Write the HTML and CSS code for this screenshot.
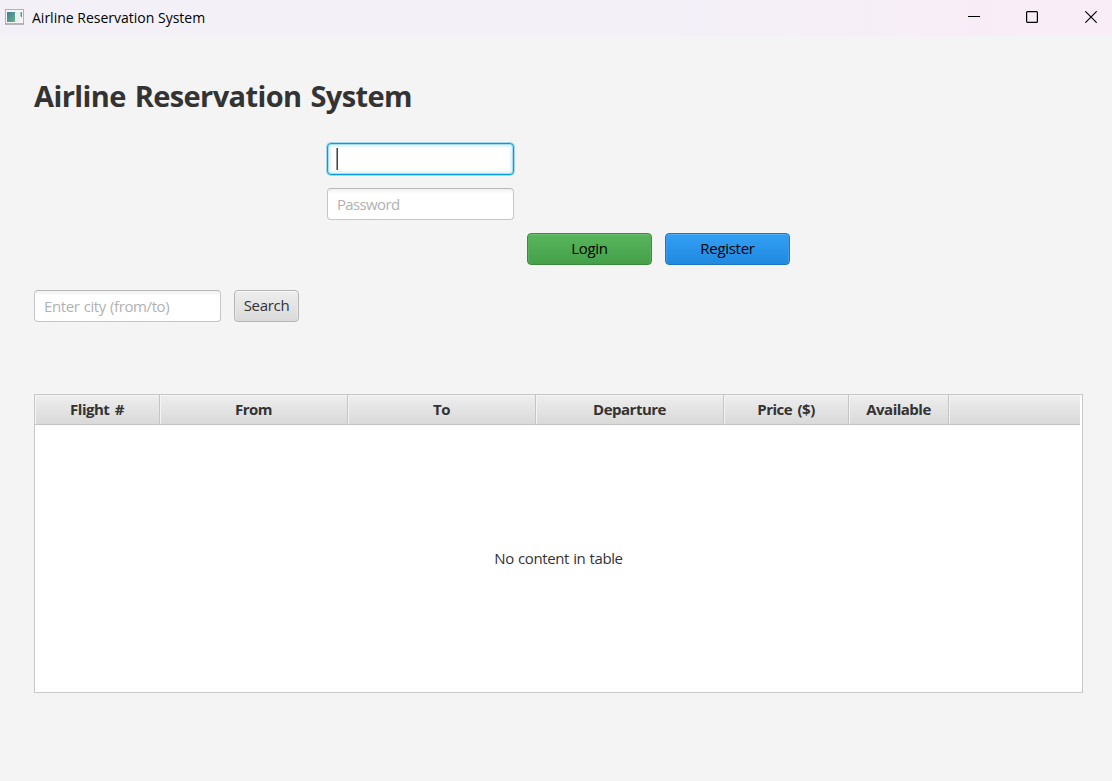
FILE: index.html
```html
<!DOCTYPE html>
<html lang="en">
<head>
<meta charset="utf-8">
<title>Airline Reservation System</title>
<link rel="stylesheet" href="styles.css">
</head>
<body>
<header class="titlebar">
  <svg class="app-icon" width="19" height="16" viewBox="0 0 19 16">
    <defs><linearGradient id="pane" x1="0" y1="0" x2="1" y2="1"><stop offset="0" stop-color="#4779a0"/><stop offset="1" stop-color="#60b580"/></linearGradient></defs>
    <rect x=".5" y=".5" width="18" height="14.500" fill="#f6f6f6" stroke="#b2b2b5"/>
    <path d="M0 15H19" stroke="#95959a"/>
    <rect x="2" y="3" width="8" height="10" fill="url(#pane)"/>
    <rect x="11" y="3" width="4" height="10" fill="#e9eeee"/>
    <path d="M15.500 3h1.500v6l-1.500-2z" fill="#539a91"/>
  </svg>
  <span class="caption">Airline Reservation System</span>
  <div class="controls">
    <svg width="12" height="12" viewBox="0 0 12 12"><path d="M0 5.500H12" stroke="#000"/></svg>
    <svg width="12" height="12" viewBox="0 0 12 12"><rect x=".6" y=".6" width="10.800" height="10.800" rx="1" fill="none" stroke="#000" stroke-width="1.200"/></svg>
    <svg class="close" width="12" height="12" viewBox="0 0 12 12"><path d="M.3 .3L11.700 11.700M11.700 .3L.3 11.700" stroke="#000" stroke-width="1.150"/></svg>
  </div>
</header>
<main class="content">
  <h1 class="heading">Airline Reservation System</h1>
  <form class="login">
    <div class="field focused"><span class="caret"></span></div>
    <div class="field password"><span class="t-password">Password</span></div>
    <div class="actions">
      <button type="button" class="btn green"><span>Login</span></button>
      <button type="button" class="btn blue"><span>Register</span></button>
    </div>
  </form>
  <div class="search">
    <div class="field"><span>Enter city (from/to)</span></div>
    <button type="button" class="btn gray"><span>Search</span></button>
  </div>
  <section class="table">
    <div class="thead">
      <div class="th">Flight #</div>
      <div class="th">From</div>
      <div class="th">To</div>
      <div class="th">Departure</div>
      <div class="th">Price ($)</div>
      <div class="th">Available</div>
      <div class="th"></div>
    </div>
    <div class="empty">No content in table</div>
  </section>
</main>
</body>
</html>
```
FILE: styles.css
```css
* { box-sizing: border-box; }
body {
  margin: 0;
  height: 781px;
  overflow: hidden;
  background: #f4f4f4;
  color: #333;
  font: 15px/20px "Open Sans", "Noto Sans", sans-serif;
  letter-spacing: -0.4px;
  word-spacing: 0.7px;
  white-space: nowrap;
}
.titlebar {
  display: flex;
  align-items: center;
  height: 36px;
  padding: 0 15px 2px 5px;
  background: linear-gradient(90deg, #f3f0f8 0, #f3f0f8 60%, #f9edf7 92%, #f9edf7 100%);
  color: #000;
}
.app-icon { margin-right: 8px; }
.caption { padding-top: 1px; font-size: 14px; letter-spacing: 0; word-spacing: 0; }
.controls { display: flex; gap: 46px; margin-left: auto; }
.controls svg { display: block; }
.close { margin-left: 1px; }
.content { padding: 40px 29px 0 34px; }
.heading {
  margin: 0;
  font-size: 29px;
  line-height: 40px;
  font-weight: 700;
  letter-spacing: -0.6px;
  word-spacing: 2px;
}
.login {
  display: flex;
  flex-direction: column;
  margin: 27px 0 0 293px;
}
.field {
  display: flex;
  align-items: center;
  width: 187px;
  height: 32px;
  padding: 0 9px;
  border: 1px solid #c6c6c6;
  border-top-color: #b8b8b8;
  border-radius: 4px;
  background: linear-gradient(#f1f1f1, #fff 5px);
  color: #b1b1b1;
}
.focused {
  border-color: #039ed3;
  background: #fff;
  box-shadow: 0 0 0 1px #a0d9ee, inset 0 0 0 1px #a9dcef, inset 0 0 0 3px #e5f5fb;
}
.caret {
  width: 2px;
  height: 22px;
  margin-left: -1px;
  background: linear-gradient(90deg, #999 50%, #444 50%);
}
.password { margin-top: 13px; }
.t-password { letter-spacing: -0.65px; }
.actions { display: flex; gap: 13px; margin: 13px 0 0 200px; }
.btn {
  width: 125px;
  height: 32px;
  padding: 0 0 2px;
  border: 1px solid;
  border-radius: 4px;
  font: inherit;
  letter-spacing: -0.3px;
  color: #000;
}
.green {
  border-color: #3a8b3d;
  background: linear-gradient(#58b65c, #45a049);
  box-shadow: inset 0 1px #6fc072, inset 1px 0 #58b15b, inset -1px 0 #58b15b;
}
.blue {
  border-color: #1c76c0;
  background: linear-gradient(#329ff5, #2089df);
  box-shadow: inset 0 1px #50adf6, inset 1px 0 #3a9ceb, inset -1px 0 #3a9ceb;
}
.search { display: flex; gap: 13px; margin-top: 25px; }
.gray {
  width: 65px;
  border-color: #b5b5b5;
  background: linear-gradient(#eee, #d9d9d9);
  box-shadow: inset 0 1px #fafafa, inset 1px 0 #eaeaea, inset -1px 0 #eaeaea;
  color: #333;
}
.table {
  height: 299px;
  margin-top: 72px;
  border: 1px solid #c8c8c8;
  background: #fff;
}
.thead {
  display: grid;
  grid-template-columns: 125px 188px 188px 188px 125px 100px 131px;
  height: 30px;
}
.th {
  display: flex;
  align-items: center;
  justify-content: center;
  padding-bottom: 2px;
  border-right: 1px solid #c5c5c5;
  border-bottom: 1px solid #c3c3c3;
  background: linear-gradient(#eee, #d9d9d9);
  box-shadow: inset 1px 1px #f4f4f4;
  font-weight: 700;
  letter-spacing: -0.5px;
  word-spacing: 2px;
}
.th:last-child { border-right: 0; }
.empty {
  display: flex;
  align-items: center;
  justify-content: center;
  height: 266px;
}
```
